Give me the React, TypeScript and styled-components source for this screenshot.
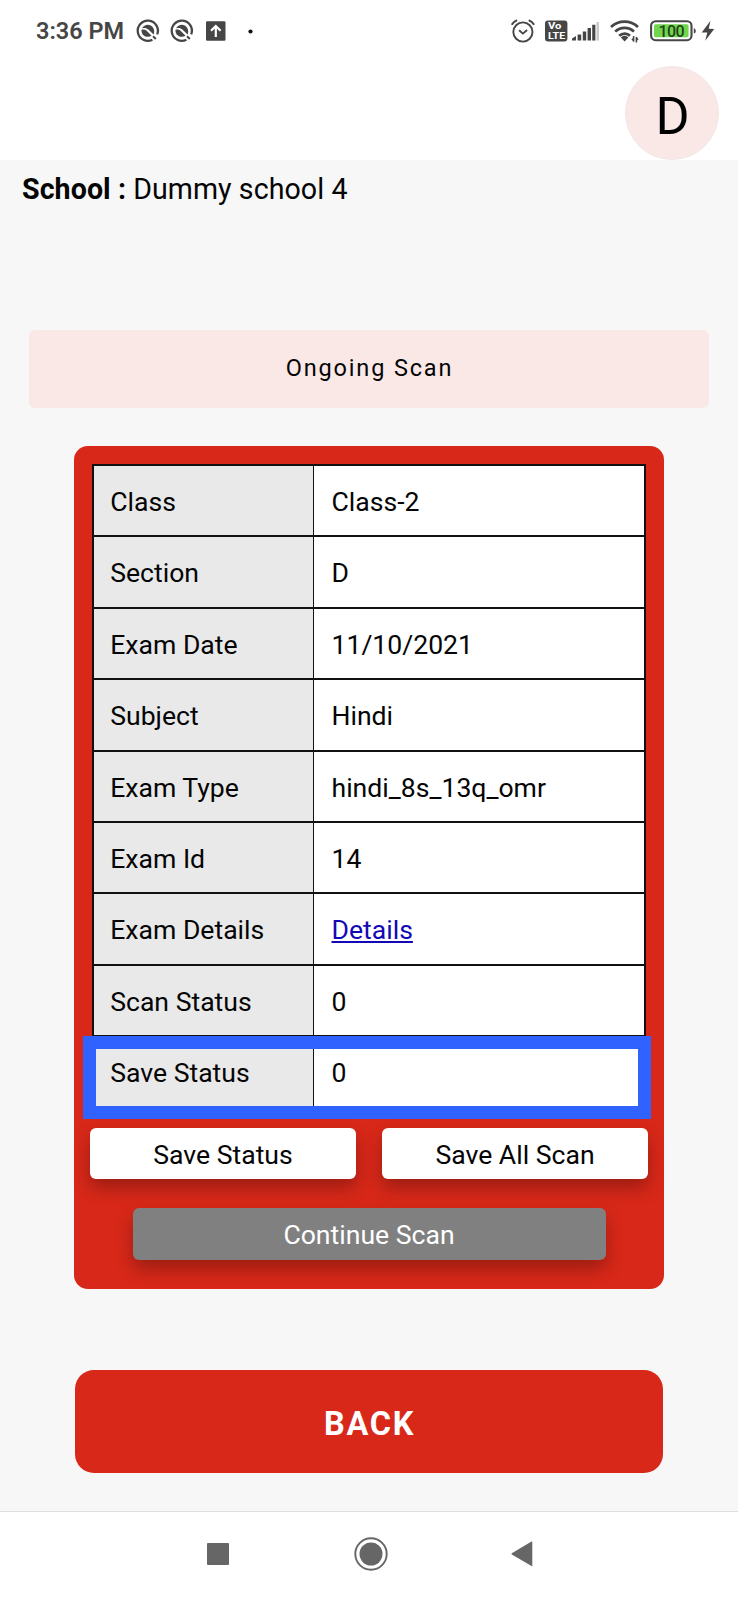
import React from "react";
import styled, { createGlobalStyle } from "styled-components";

const ink = "#464646";
const red = "#d82819";
const blush = "#fae8e6";

const GlobalStyle = createGlobalStyle`
  *, *::before, *::after { box-sizing: border-box; }
  body { margin: 0; background: #f7f7f7; font-family: Roboto, "Liberation Sans", sans-serif; }
`;

const Screen = styled.div`
  display: flex;
  flex-direction: column;
  width: 738px;
  height: 1600px;
  overflow: hidden;
  background: #f7f7f7;
  color: #050505;
`;

const StatusBar = styled.div`
  display: flex;
  justify-content: space-between;
  align-items: center;
  height: 62px;
  padding: 0 23px 0 36px;
  background: #fff;
  flex: none;
`;

const StatusGroup = styled.div`
  display: flex;
  align-items: center;
`;

const Clock = styled.span`
  width: 100px;
  font-size: 23.5px;
  font-weight: 600;
  line-height: 28px;
  color: ${ink};
  white-space: nowrap;
`;

const Glyph = styled.svg<{ $left?: number }>`
  display: block;
  flex: none;
  margin-left: ${(p) => p.$left ?? 0}px;
  overflow: visible;
`;

const Header = styled.header`
  display: flex;
  justify-content: flex-end;
  align-items: flex-end;
  height: 98px;
  padding-right: 19px;
  background: #fff;
  flex: none;
`;

const Avatar = styled.div`
  display: flex;
  justify-content: center;
  align-items: center;
  width: 94px;
  height: 94px;
  padding: 7px 0 0 1px;
  border: 1px solid #f1e8e7;
  border-radius: 50%;
  background: ${blush};
  color: #000;
  font-size: 52px;
  line-height: 60px;
`;

const School = styled.p`
  margin: 12px 0 1px 22px;
  font-size: 28.6px;
  line-height: 34px;
  letter-spacing: 0.06px;
  white-space: nowrap;
`;

const Banner = styled.div`
  display: flex;
  justify-content: center;
  align-items: center;
  height: 78px;
  margin: 123px 29px 0 29px;
  padding: 0 0 2px 1px;
  border-radius: 6px;
  background: ${blush};
  font-size: 23.5px;
  letter-spacing: 1.85px;
`;

const Card = styled.section`
  display: flex;
  flex-direction: column;
  height: 843px;
  margin: 38px 74px 0;
  padding: 18px 16px 0;
  border-radius: 14px;
  background: ${red};
`;

const Table = styled.div`
  width: 554px;
  margin-left: 2px;
  border: solid #111;
  border-width: 0 2px 0 2px;
`;

const Row = styled.div`
  position: relative;
  display: flex;
  height: 71.4px;
  border-top: 2px solid #111;
  font-size: 26.6px;
  line-height: 32px;
`;

const Label = styled.div`
  width: 220px;
  padding: 20px 0 0 16.2px;
  border-right: 1px solid #111;
  background: #e9e9e9;
`;

const Value = styled.div`
  flex: 1;
  padding: 20px 0 0 17.5px;
  background: #fff;
`;

const DetailsLink = styled.a`
  color: #1208b5;
  text-decoration: underline;
  text-decoration-thickness: 1.5px;
  text-underline-offset: 2px;
`;

const Highlight = styled.div`
  position: absolute;
  top: -1px;
  left: -11px;
  width: 568px;
  height: 83px;
  border: 13px solid #2f62ff;
`;

const ButtonPair = styled.div`
  display: flex;
  justify-content: space-between;
  margin-top: 21px;
`;

const ActionButton = styled.button<{ $width: number; $muted?: boolean }>`
  width: ${(p) => p.$width}px;
  height: 51.5px;
  padding: 3px 0 0;
  border: 0;
  border-radius: 6px;
  background: ${(p) => (p.$muted ? "#808080" : "#fff")};
  color: ${(p) => (p.$muted ? "#fff" : "#050505")};
  box-shadow: 0 9px 18px rgba(0, 0, 0, 0.28);
  font: 26.6px/32px Roboto, "Liberation Sans", sans-serif;
`;

const ContinueRow = styled.div`
  display: flex;
  justify-content: center;
  margin-top: 29px;
`;

const BackButton = styled.button`
  height: 103px;
  margin: 81px 75px 0;
  padding: 4px 0 0 1px;
  border: 0;
  border-radius: 19px;
  background: ${red};
  color: #fff;
  font: 700 32.5px/40px Roboto, "Liberation Sans", sans-serif;
  letter-spacing: 1.7px;
`;

const NavBar = styled.nav`
  display: flex;
  align-items: center;
  height: 89px;
  margin-top: auto;
  padding-left: 207px;
  padding-bottom: 4px;
  border-top: 1px solid #dfdfdf;
  background: #fff;
`;

const rows: [string, React.ReactNode][] = [
  ["Class", "Class-2"],
  ["Section", "D"],
  ["Exam Date", "11/10/2021"],
  ["Subject", "Hindi"],
  ["Exam Type", "hindi_8s_13q_omr"],
  ["Exam Id", "14"],
  ["Exam Details", <DetailsLink key="details">Details</DetailsLink>],
  ["Scan Status", "0"],
  ["Save Status", "0"],
];

const ScanIcon = ({ left }: { left?: number }) => (
  <Glyph $left={left} width="24" height="24" viewBox="0 0 24 24" fill="none">
    <path d="M16.4 20.7A10.1 10.1 0 1 1 21.2 15.4" stroke={ink} strokeWidth="2.3" />
    <path d="M6 9.4C8.6 4.6 14.6 4.6 17.3 9 18.6 11.4 18.3 13.8 17.6 15.6L12.4 10.6C10.4 8.8 8.4 8.6 6 9.4Z" fill={ink} />
    <path d="M5.4 11C7.6 10.1 9.4 10.6 10.8 12L15.6 16.8C11.6 19.4 5.4 17.2 5.4 11Z" fill={ink} />
    <path d="M17 17.2L19.8 20" stroke={ink} strokeWidth="2" />
  </Glyph>
);

export default function App() {
  return (
    <>
      <GlobalStyle />
      <Screen>
        <StatusBar>
          <StatusGroup>
            <Clock>3:36 PM</Clock>
            <ScanIcon left={-0.5} />
            <ScanIcon left={10} />
            <Glyph $left={12.5} width="20" height="20" viewBox="0 0 20 20">
              <rect width="19.5" height="19.5" y="0.2" rx="1.2" fill={ink} />
              <path d="M9.8 16V5.2M5 9.8L9.8 5L14.6 9.8" fill="none" stroke="#fff" strokeWidth="2.2" />
            </Glyph>
            <Glyph $left={21.5} width="5" height="5" viewBox="0 0 5 5">
              <circle cx="2.5" cy="2.5" r="2.1" fill="#111" />
            </Glyph>
          </StatusGroup>
          <StatusGroup>
            <Glyph width="24" height="24" viewBox="0 0 24 24" fill="none" stroke={ink}>
              <circle cx="12.9" cy="13" r="9.6" strokeWidth="1.9" />
              <path d="M9.1 11.2L12.9 14.6L17.1 11" strokeWidth="1.9" />
              <path d="M1.7 5.8C2.9 3.6 4.7 2 7.1 1.2M24.1 5.8C22.9 3.6 21.1 2 18.7 1.2" strokeWidth="2" />
            </Glyph>
            <Glyph $left={10.7} width="23" height="22" viewBox="0 0 23 22">
              <rect y="0.6" width="22.4" height="20.8" rx="3" fill={ink} />
              <text x="3" y="9.4" fill="#fff" fontSize="9.4" fontWeight="700" textLength="13.5" lengthAdjust="spacingAndGlyphs">Vo</text>
              <text x="3" y="19" fill="#fff" fontSize="9.4" fontWeight="700" textLength="17.2" lengthAdjust="spacingAndGlyphs">LTE</text>
            </Glyph>
            <Glyph $left={3.8} width="28" height="20" viewBox="0 0 28 20">
              <path d="M0 19.5V17.5L4 15V19.5ZM5.6 19.5V13.5H9.2V19.5ZM10.8 19.5V10.4H14.2V19.5ZM15.6 19.5V7H19V19.5ZM20.2 19.5V3.8H23.4V19.5Z" fill={ink} />
              <path d="M24.5 19.5V1H27V19.5Z" fill="#c9c9c9" />
            </Glyph>
            <Glyph $left={10.5} width="30" height="24" viewBox="0 0 30 24">
              <path d="M1 8C8.5 0.7 20.5 0.7 28 8M5.2 12.6C10.5 7.5 18.8 7.5 24 12.6M9.2 16.8C12.4 13.8 17 13.8 20 16.8" fill="none" stroke={ink} strokeWidth="2.7" />
              <path d="M10.8 18.5A5 5 0 0 1 18.4 18.5L14.6 22.6Z" fill={ink} />
              <path d="M23.6 22.6V17M26.4 18V23.6" stroke={ink} strokeWidth="1.5" />
              <path d="M21.3 20.2L23.9 23V18.6ZM28.7 20.2L26.1 17.6V22Z" fill={ink} />
            </Glyph>
            <Glyph $left={10} width="47" height="22" viewBox="0 0 47 22">
              <rect x="1.1" y="1.2" width="40.4" height="19" rx="4.5" fill="none" stroke={ink} strokeWidth="2.1" />
              <rect x="4" y="4.2" width="34.6" height="13" rx="1.6" fill="#72d64c" />
              <path d="M43.8 8.2C46.4 8.4 46.4 13.4 43.8 13.6Z" fill={ink} />
              <text x="8.6" y="16.6" fill="#23421d" fontSize="16" fontWeight="500" textLength="26">100</text>
            </Glyph>
            <Glyph $left={4} width="14" height="22" viewBox="0 0 14 22">
              <path d="M9.5 0.8L0.7 12.4L6.3 12.6L4.2 20.8L13.2 9L7.7 8.7Z" fill={ink} />
            </Glyph>
          </StatusGroup>
        </StatusBar>

        <Header>
          <Avatar>D</Avatar>
        </Header>

        <School>
          <b>School :</b> Dummy school 4
        </School>

        <Banner>Ongoing Scan</Banner>

        <Card>
          <Table>
            {rows.map(([label, value], i) => (
              <Row key={label}>
                <Label>{label}</Label>
                <Value>{value}</Value>
                {i === rows.length - 1 && <Highlight />}
              </Row>
            ))}
          </Table>
          <ButtonPair>
            <ActionButton $width={266}>Save Status</ActionButton>
            <ActionButton $width={266}>Save All Scan</ActionButton>
          </ButtonPair>
          <ContinueRow>
            <ActionButton $width={473} $muted>Continue Scan</ActionButton>
          </ContinueRow>
        </Card>

        <BackButton>BACK</BackButton>

        <NavBar>
          <Glyph width="22" height="22" viewBox="0 0 22 22">
            <rect width="22" height="22" rx="1" fill="#666" />
          </Glyph>
          <Glyph $left={125} width="34" height="34" viewBox="0 0 34 34">
            <circle cx="17" cy="17" r="15.7" fill="none" stroke="#666" strokeWidth="1.9" />
            <circle cx="17" cy="17" r="11.5" fill="#666" />
          </Glyph>
          <Glyph $left={123} width="22" height="26" viewBox="0 0 22 26">
            <path d="M0.8 12.3L20.5 0.6Q21.3 0.3 21.3 1.2V24.6Q21.3 25.6 20.5 25.1L0.8 13.4Q0 12.8 0.8 12.3Z" fill="#666" />
          </Glyph>
        </NavBar>
      </Screen>
    </>
  );
}
